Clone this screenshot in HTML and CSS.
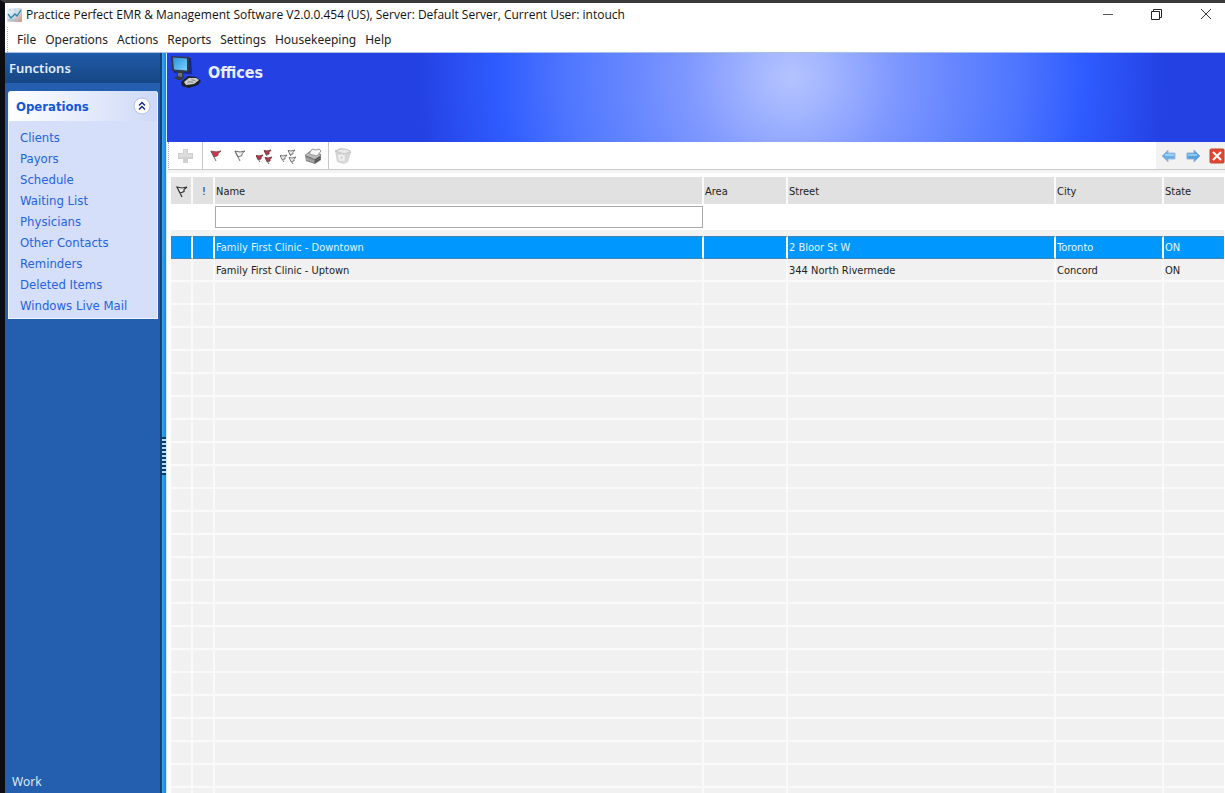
FILE: index.html
```html
<!DOCTYPE html>
<html lang="en">
<head>
<meta charset="utf-8">
<meta name="viewport" content="width=device-width, initial-scale=1">
<title>Practice Perfect EMR &amp; Management Software</title>
<link rel="stylesheet" href="styles.css">
</head>
<body>
<header class="titlebar">
  <svg class="app-icon" width="17" height="16" viewBox="0 0 17 16" aria-hidden="true">
    <defs><linearGradient id="app" x1="0" y1="0" x2="1" y2="1"><stop offset="0" stop-color="#f4fafc"/><stop offset=".55" stop-color="#c9d9e2"/><stop offset="1" stop-color="#e58a70"/></linearGradient></defs>
    <rect x="1" y="1" width="15" height="14" rx="1" fill="url(#app)"/>
    <path d="M2 7l3 4 4-4 2 2 4-6" fill="none" stroke="#2d83ac" stroke-width="1.300"/>
    <path d="M2 13h12" fill="none" stroke="#a3b9ca"/>
    <path d="M3 3h2M8 3h2" stroke="#9fcbe0"/>
  </svg>
  <h1 class="title">Practice Perfect EMR &amp; Management Software V2.0.0.454 (US), Server: Default Server, Current User: intouch</h1>
  <div class="window-buttons">
    <button class="window-button" aria-label="Minimize"><svg width="12" height="12" viewBox="0 0 12 12"><path d="M1 5.500h10" stroke="#555"/></svg></button>
    <button class="window-button" aria-label="Restore"><svg width="12" height="12" viewBox="0 0 12 12"><path d="M.5 2.500h8v8h-8zM2.500 2.500v-2h8v8h-2" fill="none" stroke="#222"/></svg></button>
    <button class="window-button" aria-label="Close"><svg width="12" height="12" viewBox="0 0 12 12"><path d="M1 0l10 10M11 0L1 10" stroke="#333"/></svg></button>
  </div>
</header>
<nav class="menubar" aria-label="Main menu">
  <button class="menu">File</button><button class="menu">Operations</button><button class="menu">Actions</button><button class="menu">Reports</button><button class="menu">Settings</button><button class="menu">Housekeeping</button><button class="menu">Help</button>
</nav>
<div class="workspace">
  <aside class="sidebar">
    <h2 class="sidebar-title">Functions</h2>
    <section class="panel">
      <div class="panel-head">
        <h3 class="panel-title">Operations</h3>
        <button class="collapse" aria-label="Collapse Operations"><svg width="18" height="18" viewBox="0 0 18 18"><circle cx="9" cy="9" r="8" fill="#fff" stroke="#b3c0e2"/><path d="M6 8.500l3-3 3 3M6 12.500l3-3 3 3" fill="none" stroke="#1b2d96" stroke-width="1.500"/></svg></button>
      </div>
      <ul class="links">
        <li><a href="#">Clients</a></li>
        <li><a href="#">Payors</a></li>
        <li><a href="#">Schedule</a></li>
        <li><a href="#">Waiting List</a></li>
        <li><a href="#">Physicians</a></li>
        <li><a href="#">Other Contacts</a></li>
        <li><a href="#">Reminders</a></li>
        <li><a href="#">Deleted Items</a></li>
        <li><a href="#">Windows Live Mail</a></li>
      </ul>
    </section>
    <p class="sidebar-status">Work</p>
  </aside>
  <div class="splitter"><div class="grip"></div></div>
  <main class="content">
    <div class="banner">
      <svg width="34" height="36" viewBox="0 0 34 36" aria-hidden="true">
        <defs><linearGradient id="scr" x1="0" y1="0" x2="1" y2="1"><stop offset="0" stop-color="#2b93dc"/><stop offset="1" stop-color="#7cd0ff"/></linearGradient></defs>
        <path d="M3 4l18 1 1 16-18-1z" fill="#10144e" opacity=".6"/>
        <path d="M1 3l18 1v15L2 18z" fill="#303a48"/>
        <path d="M3 4.500l14 1v12L4 16.500z" fill="url(#scr)"/>
        <path d="M7 18h6l1 6-2 3H8l-4-2 3-2z" fill="#353c44"/>
        <path d="M8 20h4v4l-4-1z" fill="#6d7580"/>
        <path d="M11 29l7-6 8 1 5 4-3 4-9 3-7-2z" fill="#1d2229"/>
        <path d="M14 29l5-4 7 0 3 2-5 4-8 1z" fill="#d0d2cf"/>
        <path d="M18 28l6 2M21 26l5 2M17 30l8-3" stroke="#959b9e"/>
      </svg>
      <h2 class="banner-title">Offices</h2>
    </div>
    <div class="toolbar">
      <div class="tools">
        <button class="tool" aria-label="Add"><svg width="18" height="18" viewBox="0 0 18 18"><path d="M7 2h5v4h5v6h-5v4H7v-4H2V6h5z" fill="#d0d0d0"/><path d="M8 3h3v4h5v3H3V7h5z" fill="#dedede"/></svg></button>
      </div>
      <div class="tools tools-divided">
        <button class="tool" aria-label="Flag"><svg width="18" height="18" viewBox="0 0 18 18"><path d="M3 4l5 1 5-1-3 2.500 0 2-4 1.500z" fill="#d0304a" stroke="#96505a"/><path d="M3 4l5 10" fill="none" stroke="#666"/></svg></button>
        <button class="tool" aria-label="Clear flag"><svg width="18" height="18" viewBox="0 0 18 18"><path d="M3 4l5 1 5-1-3 2.500 0 2-4 1.500zM3 4l5 10" fill="#f4f4f4" stroke="#707070"/></svg></button>
        <button class="tool" aria-label="Flag all"><svg width="18" height="18" viewBox="0 0 18 18"><path d="M8 3.500l3 .5 4-1-2 2.500v1.500l-3 .5zM0 8.500l3 .5 4-1-2 2.500v1.500l-3 .5zM9 10.500l3 .5 4-1-2 2.500v1.500l-3 .5z" fill="#b8384b" stroke="#7d3a43"/><path d="M10 7l1 2M2 12l2 3M11 14l2 3" stroke="#666"/></svg></button>
        <button class="tool" aria-label="Clear all flags"><svg width="18" height="18" viewBox="0 0 18 18"><path d="M8 3.500l3 .5 4-1-2 2.500v1.500l-3 .5zM0 8.500l3 .5 4-1-2 2.500v1.500l-3 .5zM9 10.500l3 .5 4-1-2 2.500v1.500l-3 .5zM10 7l1 2M2 12l2 3M11 14l2 3" fill="#eee" stroke="#757575"/></svg></button>
        <button class="tool" aria-label="Print"><svg width="18" height="18" viewBox="0 0 18 18"><path d="M1 8l5-4 11 3v6l-6 4-9-3z" fill="#777"/><path d="M1 8l6-3 10 3-6 4z" fill="#bcbcbc"/><path d="M5 7l3-5 4 1 3-1 2 2-4 5z" fill="#f7f7f7" stroke="#999"/><path d="M2 10l8 3v3l-8-3z" fill="#a2a2a2"/><path d="M11 13l5-3M11 15l5-3" stroke="#444"/></svg></button>
      </div>
      <div class="tools tools-divided">
        <button class="tool" aria-label="Recycle bin"><svg width="18" height="18" viewBox="0 0 18 18"><path d="M1 4l5-3 10 2 1 2-3 10-4 2-7-2z" fill="#d6d6d6"/><path d="M1 4l9 3 7-2-5-3-5 0z" fill="#e8e8e8" stroke="#c4c4c4"/><path d="M5 9l3-1 2 2-1 3H6z" fill="none" stroke="#f5f5f5" stroke-width="1.500"/><path d="M11 7l-1 9" stroke="#e8e8e8"/></svg></button>
      </div>
      <div class="nav-tools">
        <button class="tool" aria-label="Back"><svg width="18" height="18" viewBox="0 0 18 18"><path d="M2 9l6-6v3h7v6H8v3z" fill="#69aeea" stroke="#a2bdd9"/><path d="M5 8h9" stroke="#9bd0fb" stroke-width="2"/></svg></button>
        <button class="tool" aria-label="Forward"><svg width="18" height="18" viewBox="0 0 18 18"><path d="M16 9l-6-6v3H3v6h7v3z" fill="#559fe2" stroke="#91b3d5"/><path d="M4 8h9" stroke="#8fc9fa" stroke-width="2"/></svg></button>
        <button class="tool" aria-label="Close view"><svg width="18" height="18" viewBox="0 0 18 18"><rect x="2" y="2" width="14" height="14" rx="1" fill="#e5452d" stroke="#bd4936"/><path d="M5 5l8 8M13 5l-8 8" stroke="#fff" stroke-width="2"/></svg></button>
      </div>
    </div>
    <div class="grid-area">
      <table class="grid">
        <colgroup><col class="col-mark"><col class="col-mark"><col><col class="col-area"><col class="col-street"><col class="col-city"><col class="col-state"></colgroup>
        <thead>
          <tr class="head"><th aria-label="Flag" class="mark"><svg width="14" height="14" viewBox="0 0 14 14"><path d="M2 2l5 1 5-1-3 2.500 0 2-4 1.500zM2 2l5 10" fill="#eee" stroke="#333" stroke-width="1.200"/></svg></th><th class="mark">!</th><th>Name</th><th>Area</th><th>Street</th><th>City</th><th>State</th></tr>
          <tr class="filter"><td></td><td></td><td class="filter-cell"><input class="filter-input" type="text" aria-label="Filter by name"></td><td></td><td></td><td></td><td></td></tr>
        </thead>
        <tbody>
          <tr class="selected"><td></td><td></td><td>Family First Clinic - Downtown</td><td></td><td>2 Bloor St W</td><td>Toronto</td><td>ON</td></tr>
          <tr><td></td><td></td><td>Family First Clinic - Uptown</td><td></td><td>344 North Rivermede</td><td>Concord</td><td>ON</td></tr>
          <tr><td></td><td></td><td></td><td></td><td></td><td></td><td></td></tr>
          <tr><td></td><td></td><td></td><td></td><td></td><td></td><td></td></tr>
          <tr><td></td><td></td><td></td><td></td><td></td><td></td><td></td></tr>
          <tr><td></td><td></td><td></td><td></td><td></td><td></td><td></td></tr>
          <tr><td></td><td></td><td></td><td></td><td></td><td></td><td></td></tr>
          <tr><td></td><td></td><td></td><td></td><td></td><td></td><td></td></tr>
          <tr><td></td><td></td><td></td><td></td><td></td><td></td><td></td></tr>
          <tr><td></td><td></td><td></td><td></td><td></td><td></td><td></td></tr>
          <tr><td></td><td></td><td></td><td></td><td></td><td></td><td></td></tr>
          <tr><td></td><td></td><td></td><td></td><td></td><td></td><td></td></tr>
          <tr><td></td><td></td><td></td><td></td><td></td><td></td><td></td></tr>
          <tr><td></td><td></td><td></td><td></td><td></td><td></td><td></td></tr>
          <tr><td></td><td></td><td></td><td></td><td></td><td></td><td></td></tr>
          <tr><td></td><td></td><td></td><td></td><td></td><td></td><td></td></tr>
          <tr><td></td><td></td><td></td><td></td><td></td><td></td><td></td></tr>
          <tr><td></td><td></td><td></td><td></td><td></td><td></td><td></td></tr>
          <tr><td></td><td></td><td></td><td></td><td></td><td></td><td></td></tr>
          <tr><td></td><td></td><td></td><td></td><td></td><td></td><td></td></tr>
          <tr><td></td><td></td><td></td><td></td><td></td><td></td><td></td></tr>
          <tr><td></td><td></td><td></td><td></td><td></td><td></td><td></td></tr>
          <tr><td></td><td></td><td></td><td></td><td></td><td></td><td></td></tr>
          <tr><td></td><td></td><td></td><td></td><td></td><td></td><td></td></tr>
          <tr><td></td><td></td><td></td><td></td><td></td><td></td><td></td></tr>
        </tbody>
      </table>
    </div>
  </main>
</div>
</body>
</html>
```
FILE: styles.css
```css
* { box-sizing: border-box; }
body {
  margin: 0;
  height: 100vh;
  display: flex;
  flex-direction: column;
  overflow: hidden;
  border-top: 3px solid #3a3a3a;
  border-left: 5px solid #0c0d12;
  background: #fff;
  color: #222;
  font-family: "Noto Sans", "Open Sans", sans-serif;
  font-size: 12px;
}
h1, h2, h3, p, ul { margin: 0; padding: 0; }
button { border: 0; padding: 0; background: none; font: inherit; color: inherit; }
svg { display: block; }

.titlebar { display: flex; align-items: center; height: 24px; flex: none; }
.app-icon { margin: 0 3px 0 1px; }
.title { flex: 1; font-family: "Open Sans", sans-serif; font-size: 12px; font-weight: 400; line-height: 24px; white-space: nowrap; color: #111; }
.window-buttons { display: flex; gap: 11px; }
.window-button { width: 38px; height: 20px; display: flex; justify-content: center; align-items: center; }

.menubar { display: flex; height: 25px; flex: none; margin-left: 2px; padding-left: 5px; border-left: 1px dotted #aaa; }
.menu { padding: 0 5px 0 4px; line-height: 25px; }

.workspace { flex: 1; display: flex; min-height: 0; border-top: 1px solid #a9bfea; }
.sidebar { width: 155px; flex: none; display: flex; flex-direction: column; background: #245eae; }
.sidebar-title { height: 30px; flex: none; padding-left: 4px; line-height: 30px; font-size: 13px; font-weight: 600; color: #e4edfb; background: linear-gradient(#1f5ba8, #174684); }
.panel { margin: 8px 2px 0 3px; border: 1px solid #eff4ff; border-top: 0; border-radius: 3px 3px 0 0; background: #d5dffa; }
.panel-head { display: flex; align-items: center; justify-content: space-between; height: 30px; padding: 0 6px 0 7px; border-radius: 3px 3px 0 0; background: linear-gradient(90deg, #fff, #cdd9f8); }
.panel-title { font-family: "DejaVu Sans Condensed", "DejaVu Sans", sans-serif; font-size: 13px; font-weight: 700; color: #1257d8; }
.links { list-style: none; padding: 6px 0 2px 11px; }
.links li { height: 21px; line-height: 21px; font-family: "DejaVu Sans Condensed", "DejaVu Sans", sans-serif; font-size: 13px; }
.links a { color: #2463e0; text-decoration: none; }
.sidebar-status { margin-top: auto; padding: 0 7px; line-height: 22px; color: #dce9fb; }

.splitter { width: 7px; flex: none; display: flex; align-items: center; border-left: 2px solid #154273; border-right: 1px solid #d6ecfc; background: linear-gradient(90deg, #38aaf4, #1684df); }
.grip { width: 4px; height: 38px; margin-top: 66px; background: repeating-linear-gradient(#0d3b68 0 2px, #a9dcff 2px 4px); }

.content { flex: 1; min-width: 0; display: flex; flex-direction: column; }
.banner { display: flex; height: 89px; flex: none; padding-left: 3px; background: radial-gradient(circle 375px at 59% 24px, #b4c3ff 0, #a3b5ff 10%, #8099ff 27%, #6485ff 45%, #4f76ff 60%, #2f5cff 78%, #2441e3 100%); }
.banner-title { margin-left: 4px; line-height: 40px; font-family: "DejaVu Sans Condensed", "DejaVu Sans", sans-serif; font-size: 16px; font-weight: 700; color: #e8eeff; }

.toolbar { display: flex; height: 28px; flex: none; border-bottom: 1px solid #ccc; background: #fff; margin-left: 1px; border-left: 1px dotted #aaa; }
.tools { display: flex; align-items: center; gap: 6px; padding: 0 8px 0 7px; }
.tools-divided { border-left: 1px solid #c8c8c8; padding: 0 6px 0 5px; }
.nav-tools { display: flex; align-items: center; gap: 6px; margin-left: auto; margin-right: -1px; padding-left: 4px; background: #f2f2f2; }
.tool { width: 18px; height: 18px; }

.grid-area { flex: 1; min-height: 0; overflow: hidden; padding: 4px 1px 0 4px; border-top: 3px solid #f4f4f4; }
.grid { width: 100%; table-layout: fixed; border-collapse: separate; border-spacing: 0; font-family: "DejaVu Sans Condensed", "DejaVu Sans", sans-serif; font-size: 11px; }
.col-mark { width: 22px; }
.col-area { width: 84px; }
.col-street { width: 268px; }
.col-city { width: 108px; }
.col-state { width: 60px; }
.grid th, .grid td { padding: 2px 1px 0; text-align: left; font-weight: 400; white-space: nowrap; overflow: hidden; border-right: 2px solid #fafafa; }
.grid th:last-child, .grid td:last-child { border-right: 0; }
.head th { height: 27px; background: #e1e1e1; }
.grid .mark { padding: 2px 4px 0; }
.grid .mark + .mark { padding-left: 9px; }
.grid .filter td { height: 32px; border-right: 0; border-bottom: 6px solid #f2f2f2; }
.grid .filter-cell { padding: 0 1px 0 0; }
.filter-input { display: block; width: 100%; height: 22px; border: 1px solid #aaa; background: #fff; font: inherit; }
.grid tbody td { height: 23px; background: #f1f1f1; border-bottom: 2px solid #fafafa; }
.grid .selected td { padding-top: 0; background: #0098ff; color: #e4f5ff; border-bottom: 1px solid #4284b4; border-top: 1px solid #4284b4; }
```
